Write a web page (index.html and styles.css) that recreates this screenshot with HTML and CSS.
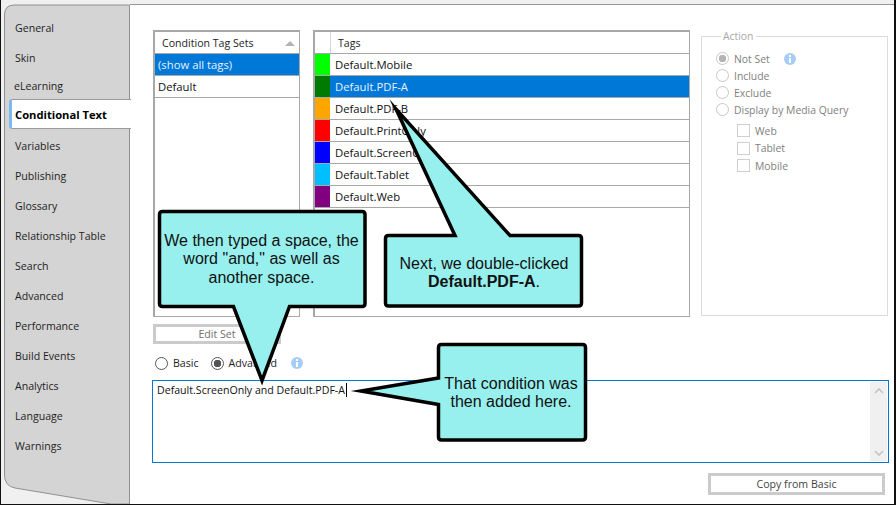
FILE: index.html
```html
<!DOCTYPE html>
<html lang="en">
<head>
  <meta charset="UTF-8">
  <title>Conditional Text</title>
  <link rel="stylesheet" href="styles.css">
</head>
<body>
  <div class="window">
    <nav class="side">
      <svg class="side-bg" width="130" height="504" viewBox="0 0 130 504">
        <path d="M128.500 5H13Q3.500 5 3.500 15V475Q3.500 486 14 488L110 504H128.500Z" fill="#d4d4d4" stroke="#909090"/>
      </svg>
      <a class="tab">General</a>
      <a class="tab">Skin</a>
      <a class="tab short">eLearning</a>
      <a class="tab active">Conditional Text</a>
      <a class="tab">Variables</a>
      <a class="tab">Publishing</a>
      <a class="tab">Glossary</a>
      <a class="tab">Relationship Table</a>
      <a class="tab">Search</a>
      <a class="tab">Advanced</a>
      <a class="tab">Performance</a>
      <a class="tab">Build Events</a>
      <a class="tab">Analytics</a>
      <a class="tab">Language</a>
      <a class="tab">Warnings</a>
    </nav>

    <main class="content">
      <div class="top">
        <div class="list sets">
          <div class="list-head">Condition Tag Sets<span class="sort"></span></div>
          <div class="row selected">(show all tags)</div>
          <div class="row">Default</div>
        </div>

        <div class="list tags">
          <div class="tag-head"><span class="swatch"></span><span class="tag-title">Tags</span></div>
          <div class="tag-row"><span class="swatch green"></span><span class="tag-name">Default.Mobile</span></div>
          <div class="tag-row selected"><span class="swatch dark"></span><span class="tag-name">Default.PDF-A</span></div>
          <div class="tag-row"><span class="swatch orange"></span><span class="tag-name">Default.PDF-B</span></div>
          <div class="tag-row"><span class="swatch red"></span><span class="tag-name">Default.PrintOnly</span></div>
          <div class="tag-row"><span class="swatch blue"></span><span class="tag-name">Default.ScreenOnly</span></div>
          <div class="tag-row"><span class="swatch sky"></span><span class="tag-name">Default.Tablet</span></div>
          <div class="tag-row"><span class="swatch purple"></span><span class="tag-name">Default.Web</span></div>
        </div>

        <fieldset class="action">
          <legend>Action</legend>
          <div class="opt"><span class="radio on"></span>Not Set
            <svg class="info" width="12" height="12" viewBox="0 0 12 12"><circle cx="6" cy="6" r="6" fill="#a6cdf5"/><rect x="5" y="2" width="2" height="2" fill="#fff"/><rect x="5" y="5" width="2" height="5" fill="#fff"/></svg>
          </div>
          <div class="opt"><span class="radio"></span>Include</div>
          <div class="opt"><span class="radio"></span>Exclude</div>
          <div class="opt"><span class="radio"></span>Display by Media Query</div>
          <div class="checks">
            <div class="check"><span class="box"></span>Web</div>
            <div class="check"><span class="box"></span>Tablet</div>
            <div class="check"><span class="box"></span>Mobile</div>
          </div>
        </fieldset>
      </div>

      <button class="btn edit">Edit Set</button>

      <div class="mode">
        <span class="mode-opt"><span class="radio dark-radio"></span>Basic</span>
        <span class="mode-opt"><span class="radio dark-radio on"></span>Advanced</span>
        <svg class="info" width="12" height="12" viewBox="0 0 12 12"><circle cx="6" cy="6" r="6" fill="#a6cdf5"/><rect x="5" y="2" width="2" height="2" fill="#fff"/><rect x="5" y="5" width="2" height="5" fill="#fff"/></svg>
      </div>

      <div class="expr">
        <div class="expr-text">Default.ScreenOnly and Default.PDF-A<span class="caret"></span></div>
        <div class="scroll">
          <svg width="10" height="6" viewBox="0 0 10 6"><path d="M1 5L5 1L9 5" fill="none" stroke="#c4c4c4" stroke-width="1.6"/></svg>
          <svg width="10" height="6" viewBox="0 0 10 6"><path d="M1 1L5 5L9 1" fill="none" stroke="#c4c4c4" stroke-width="1.6"/></svg>
        </div>
      </div>

      <div class="foot"><button class="btn copy">Copy from Basic</button></div>
    </main>

    <svg class="callouts" width="896" height="505" viewBox="0 0 896 505">
      <g class="shape">
        <path d="M162.500 211.500H362Q365 211.500 365 214.500V303.500Q365 306.500 362 306.500H289.500L262 380.500L233.500 306.500H162.500Q159.500 306.500 159.500 303.500V214.500Q159.500 211.500 162.500 211.500Z"/>
        <path d="M388.500 235.500H455L396 109L510 235.500H578.500Q581.500 235.500 581.500 238.500V303Q581.500 306 578.500 306H388.500Q385.500 306 385.500 303V238.500Q385.500 235.500 388.500 235.500Z"/>
        <path d="M441.500 344.500H582.500Q585.500 344.500 585.500 347.500V437Q585.500 440 582.500 440H441.500Q438.500 440 438.500 437V404.500L361 391L438.500 378V347.500Q438.500 344.500 441.500 344.500Z"/>
      </g>
      <text class="say" text-anchor="middle" x="261.500" y="246">We then typed a space, the</text>
      <text class="say" text-anchor="middle" x="261.500" y="264">word "and," as well as</text>
      <text class="say" text-anchor="middle" x="261.500" y="283">another space.</text>
      <text class="say" text-anchor="middle" x="484" y="269">Next, we double-clicked</text>
      <text class="say" text-anchor="middle" x="484" y="287"><tspan font-weight="bold">Default.PDF-A</tspan>.</text>
      <text class="say" text-anchor="middle" x="511" y="389">That condition was</text>
      <text class="say" text-anchor="middle" x="511" y="407">then added here.</text>
    </svg>
  </div>
</body>
</html>
```

FILE: styles.css
```css
* {
  box-sizing: border-box;
}
html, body {
  margin: 0;
  padding: 0;
}
body {
  width: 896px;
  height: 505px;
  overflow: hidden;
  background: #fff;
  font-family: "Open Sans", sans-serif;
  font-size: 10.600px;
  color: #1e1e1e;
}
.window {
  position: relative;
  display: flex;
  width: 896px;
  height: 505px;
  background: #f0f0f0;
  border-left: 1px solid #111;
  border-right: 2px solid #111;
  border-bottom: 1px solid #111;
  overflow: hidden;
}

/* left tabs */
.side {
  position: relative;
  width: 129px;
  flex: none;
  display: flex;
  flex-direction: column;
  padding-top: 13px;
}
.side-bg {
  position: absolute;
  left: 0;
  top: 0;
}
.tab {
  position: relative;
  height: 30px;
  line-height: 30px;
  padding-left: 14px;
}
.tab.short {
  height: 26px;
  line-height: 26px;
  padding-left: 13px;
}
.tab.active {
  height: 30px;
  line-height: 29px;
  margin: 0 -1px 2px 8px;
  padding-left: 3px;
  background: #fff;
  border: 1px solid #9a9a9a;
  border-left: 3px solid #7db8ee;
  border-right: 0;
  border-radius: 3px 0 0 3px;
  font-size: 11.200px;
  font-weight: 700;
  color: #000;
}

/* main area */
.content {
  flex: 1;
  margin-top: 4px;
  padding: 25px 5px 0 22px;
  display: flex;
  flex-direction: column;
  background: #fff;
  border-top: 1px solid #999;
}
.top {
  display: flex;
  height: 287px;
  margin-left: 1px;
}
.list {
  background: #fff;
  border: 1px solid #a8a8a8;
  border-width: 2px 1px 1px 2px;
}
.sets {
  width: 147px;
  margin-right: 13px;
}
.tags {
  width: 377px;
  margin-right: 11px;
}
.list-head {
  position: relative;
  height: 22px;
  line-height: 23px;
  padding-left: 7px;
  border-bottom: 1px solid #a8a8a8;
}
.sort {
  position: absolute;
  right: 4px;
  top: 9px;
  border-left: 5px solid transparent;
  border-right: 5px solid transparent;
  border-bottom: 5px solid #b4b4b4;
}
.row {
  height: 22px;
  line-height: 21px;
  padding-left: 3px;
  border-bottom: 1px solid #a8a8a8;
  font-size: 11.300px;
  color: #111;
}
.selected {
  background: #0078d7;
  color: #e8f2fb;
}
.tag-head, .tag-row {
  display: flex;
  height: 22px;
  border-bottom: 1px solid #a8a8a8;
}
.swatch {
  width: 16px;
  flex: none;
  border-right: 1px solid #d8d8d8;
}
.tag-title {
  padding-left: 7px;
  line-height: 23px;
}
.tag-name {
  flex: 1;
  padding-left: 4px;
  line-height: 21px;
  font-size: 11.300px;
  color: #111;
}
.tag-row.selected .tag-name {
  color: #e8f2fb;
}
.tag-row .swatch {
  border: 0;
  width: 15px;
  margin-right: 1px;
}
.green { background: #00ff00; }
.dark { background: #007a00; }
.orange { background: #ffa500; }
.red { background: #ff0000; }
.blue { background: #0000ff; }
.sky { background: #00bfff; }
.purple { background: #800080; }

/* action group */
.action {
  width: 187px;
  height: 287px;
  margin: 0;
  margin-top: -1px;
  padding: 7px 0 0 14px;
  border: 1px solid #dcdcdc;
  font-size: 10.400px;
  color: #808080;
}
.action legend {
  padding: 0 2px;
  margin-left: 5px;
  color: #a8a8a8;
}
.opt {
  display: flex;
  align-items: center;
  height: 17px;
}
.radio {
  width: 13px;
  height: 13px;
  margin-right: 5px;
  border: 1px solid #c8c8c8;
  border-radius: 50%;
  background: #fff;
  flex: none;
}
.radio.on {
  background: radial-gradient(circle, #b4b4b4 0 3.500px, #fff 4px);
}
.info {
  flex: none;
  margin-left: 14px;
}
.checks {
  padding: 4px 0 0 21px;
}
.check {
  display: flex;
  align-items: center;
  height: 17.500px;
}
.box {
  width: 13px;
  height: 13px;
  margin-right: 5px;
  border: 1px solid #cfcfcf;
}

/* under the lists */
.btn {
  display: block;
  height: 20px;
  padding: 0;
  border: 3px solid #cbcbcb;
  background: #fff;
  font: inherit;
  color: #6f6f6f;
  text-align: center;
}
.edit {
  width: 128px;
  margin: 7px 0 0 1px;
}
.mode {
  display: flex;
  align-items: center;
  height: 18px;
  margin: 10px 0 0 3px;
}
.mode-opt {
  display: flex;
  align-items: center;
  margin-right: 12px;
}
.dark-radio {
  border-color: #555;
}
.dark-radio.on {
  background: radial-gradient(circle, #555 0 3.500px, #fff 4px);
}
.mode .info {
  margin-left: 2px;
}
.expr {
  display: flex;
  justify-content: space-between;
  height: 83px;
  margin-top: 8px;
  border: 1px solid #0078d7;
}
.expr-text {
  padding: 1px 0 0 4px;
  color: #111;
  line-height: 17px;
}
.caret {
  display: inline-block;
  width: 1px;
  height: 14px;
  margin-left: 1px;
  vertical-align: -3px;
  background: #000;
}
.scroll {
  width: 17px;
  margin: 1px;
  padding: 6px 0 5px;
  display: flex;
  flex-direction: column;
  justify-content: space-between;
  align-items: center;
  background: #f0f0f0;
}
.foot {
  display: flex;
  justify-content: flex-end;
  padding: 10px 4px 0 0;
}
.copy {
  width: 177px;
  height: 22px;
  color: #444;
}

/* callouts sit over everything */
.callouts {
  position: absolute;
  left: -1px;
  top: 0;
}
.shape path {
  fill: #97f0ee;
  stroke: #000;
  stroke-width: 3.500;
  stroke-linejoin: miter;
  stroke-miterlimit: 10;
}
.say {
  font-family: "Liberation Sans", Arial, sans-serif;
  font-size: 16px;
  fill: #111;
}
```
